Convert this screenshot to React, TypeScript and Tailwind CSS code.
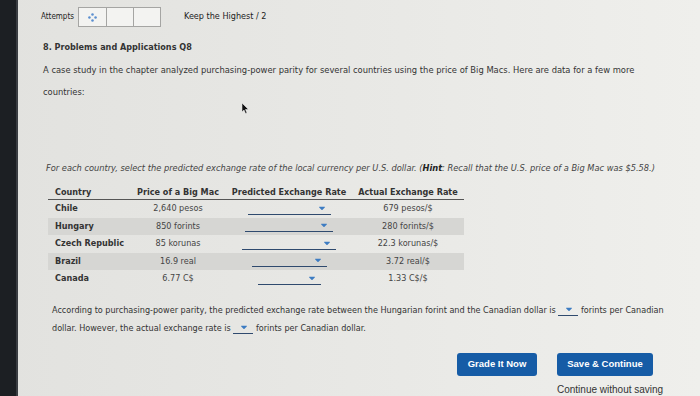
import { FaCaretDown } from "react-icons/fa";

const rows = [
  { country: "Chile", price: "2,640 pesos", actual: "679 pesos/$", shaded: false, dd: "w-[83px]" },
  { country: "Hungary", price: "850 forints", actual: "280 forints/$", shaded: true, dd: "w-[88px]" },
  { country: "Czech Republic", price: "85 korunas", actual: "22.3 korunas/$", shaded: false, dd: "w-[94px]" },
  { country: "Brazil", price: "16.9 real", actual: "3.72 real/$", shaded: true, dd: "w-[75px]" },
  { country: "Canada", price: "6.77 C$", actual: "1.33 C$/$", shaded: false, dd: "w-[63px]" },
];

const Dropdown = ({ width }: { width: string }) => (
  <span className={`inline-flex items-end justify-end h-[12px] align-middle border-b border-[#2f4a6e] pr-[4px] ${width}`}>
    <FaCaretDown className="text-[#3d7cc2] w-[10px] h-[10px] mb-[1px]" />
  </span>
);

const AttemptIcon = () => (
  <svg width="9" height="9" viewBox="0 0 10 10">
    <circle cx="5" cy="1.6" r="1.4" fill="#5b8fd0" />
    <circle cx="8.4" cy="5" r="1.4" fill="#5b8fd0" />
    <circle cx="5" cy="8.4" r="1.4" fill="#5b8fd0" />
    <circle cx="1.6" cy="5" r="1.4" fill="#5b8fd0" />
  </svg>
);

export default function App() {
  return (
    <div className="flex w-[700px] h-[396px] overflow-hidden bg-gradient-to-r from-[#e2e2df] via-[#e8e8e5] to-[#efefec] text-[#333] font-['DejaVu_Sans_Condensed','DejaVu_Sans',sans-serif] relative">
      <div className="w-[18px] shrink-0 bg-[#1c1f23] border-r-[2px] border-[#3a3d42]" />

      <div className="flex-1 pl-[23px]">
        {/* attempts */}
        <div className="mt-[7px] flex items-center h-[20px] text-[8px]">
          <span className="text-[#222]">Attempts</span>
          <div className="ml-[4px] flex h-[20px] border border-[#a5a5a3]">
            <div className="w-[27px] flex items-center justify-center bg-[#f3f3f1]">
              <AttemptIcon />
            </div>
            <div className="w-[27px] border-l border-[#a5a5a3] bg-[#f3f3f1]" />
            <div className="w-[27px] border-l border-[#a5a5a3] bg-[#f3f3f1]" />
          </div>
          <span className="ml-[23px] text-[9px] text-[#222]">Keep the Highest / 2</span>
        </div>

        <h2 className="mt-[14px] pl-[2px] h-[12px] leading-[12px] text-[9px] font-bold text-[#333]">
          8. Problems and Applications Q8
        </h2>

        <p className="mt-[6px] pl-[2px] w-[612px] text-[9.3px] leading-[22px] text-[#333]">
          A case study in the chapter analyzed purchasing-power parity for several countries using the price of Big Macs. Here are data for a few more countries:
        </p>

        <p className="mt-[59px] pl-[5px] h-[12px] leading-[12px] text-[9.2px] italic text-[#444] whitespace-nowrap">
          For each country, select the predicted exchange rate of the local currency per U.S. dollar. (<b className="text-[#222]">Hint</b>: Recall that the U.S. price of a Big Mac was $5.58.)
        </p>

        {/* table */}
        <div className="mt-[12px] ml-[7px] w-[416px] text-[9px]">
          <div className="grid grid-cols-[82px_96px_126px_112px] h-[14px] items-center border-b border-[#555] font-bold text-[#333]">
            <span className="pl-[7px]">Country</span>
            <span className="text-center">Price of a Big Mac</span>
            <span className="text-center">Predicted Exchange Rate</span>
            <span className="text-center">Actual Exchange Rate</span>
          </div>
          {rows.map((r) => (
            <div
              key={r.country}
              className={`grid grid-cols-[82px_96px_126px_112px] h-[17.5px] items-center ${r.shaded ? "bg-[#d6d6d3]" : ""}`}
            >
              <span className="pl-[7px] font-bold text-[#333]">{r.country}</span>
              <span className="text-center text-[#444]">{r.price}</span>
              <span className="flex justify-center">
                <Dropdown width={r.dd} />
              </span>
              <span className="text-center text-[#444]">{r.actual}</span>
            </div>
          ))}
        </div>

        <p className="mt-[13px] ml-[11px] w-[616px] text-[9px] leading-[18px] text-[#333]">
          According to purchasing-power parity, the predicted exchange rate between the Hungarian forint and the Canadian dollar is{" "}
          <Dropdown width="w-[20px]" /> forints per Canadian dollar. However, the actual exchange rate is{" "}
          <Dropdown width="w-[20px]" /> forints per Canadian dollar.
        </p>

        <div className="mt-[16px] ml-[416px] flex items-start gap-[20px] font-['Liberation_Sans',Arial,sans-serif]">
          <button className="w-[80px] h-[23px] rounded-[3px] bg-[#165ca6] text-white text-[9.5px] font-bold">
            Grade It Now
          </button>
          <div className="flex flex-col items-start">
            <button className="w-[96px] h-[23px] rounded-[3px] bg-[#165ca6] text-white text-[9.5px] font-bold">
              Save &amp; Continue
            </button>
            <span className="mt-[6px] text-[10px] text-[#333]">Continue without saving</span>
          </div>
        </div>
      </div>

      <svg className="absolute left-[242px] top-[103px]" width="7" height="11" viewBox="0 0 7 11">
        <path d="M0 0 L0 9 L2 7 L3.5 10.5 L5 10 L3.5 6.5 L6.5 6.5 Z" fill="#111" stroke="#fff" strokeWidth="0.5" />
      </svg>
    </div>
  );
}
